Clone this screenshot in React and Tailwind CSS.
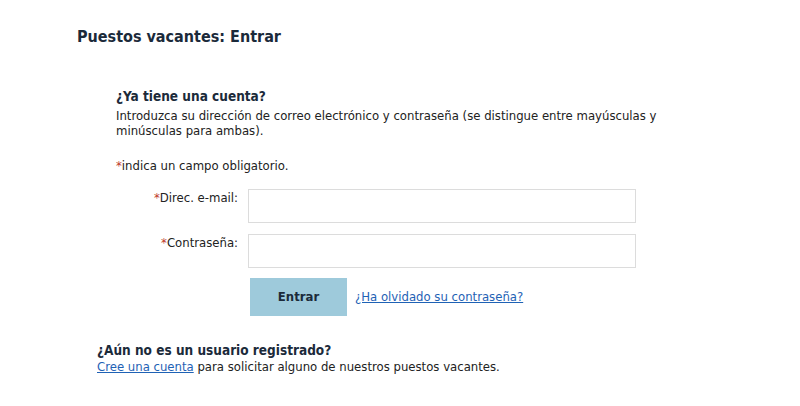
export default function App() {
  const font = { fontFamily: '"DejaVu Sans Condensed", "DejaVu Sans", sans-serif' };
  return (
    <div className="w-[800px] h-[406px] bg-white text-[#222] overflow-hidden" style={font}>
      <h1 className="pl-[77px] pt-[27px] text-[16px] leading-[20px] font-bold text-[#1b2a3a]">
        Puestos vacantes: Entrar
      </h1>
      <div className="pl-[116px] mt-[40px]">
        <h2 className="text-[13.5px] leading-[18px] font-bold text-[#1b2a3a]">¿Ya tiene una cuenta?</h2>
        <p className="text-[13px] leading-[15px] w-[560px] mt-[3px]">
          Introduzca su dirección de correo electrónico y contraseña (se distingue entre mayúsculas y minúsculas para ambas).
        </p>
        <p className="text-[13px] leading-[15px] mt-[20px]">
          <span className="text-[#c0392b]">*</span>indica un campo obligatorio.
        </p>
        <div className="grid grid-cols-[122px_388px] gap-x-[10px] gap-y-[11px] mt-[16px] text-[13px]">
          <label className="text-right pt-[1px] leading-[15px]">
            <span className="text-[#c0392b]">*</span>Direc. e-mail:
          </label>
          <input className="h-[34px] border border-[#dcdcdc] bg-white outline-none" />
          <label className="text-right pt-[1px] leading-[15px]">
            <span className="text-[#c0392b]">*</span>Contraseña:
          </label>
          <input type="password" className="h-[34px] border border-[#dcdcdc] bg-white outline-none" />
          <div />
          <div className="flex items-center gap-[8px] -mt-[1px]">
            <button className="ml-[2px] w-[97px] h-[38px] bg-[#9ecadb] font-bold text-[13px] text-[#1b2a3a]">
              Entrar
            </button>
            <a href="#" className="text-[#1f62b5] underline">¿Ha olvidado su contraseña?</a>
          </div>
        </div>
      </div>
      <div className="pl-[97px] mt-[25px]">
        <h2 className="text-[13.5px] leading-[18px] font-bold text-[#1b2a3a]">¿Aún no es un usuario registrado?</h2>
        <p className="text-[13px] leading-[16px]">
          <a href="#" className="text-[#1f62b5] underline">Cree una cuenta</a> para solicitar alguno de nuestros puestos vacantes.
        </p>
      </div>
    </div>
  );
}
